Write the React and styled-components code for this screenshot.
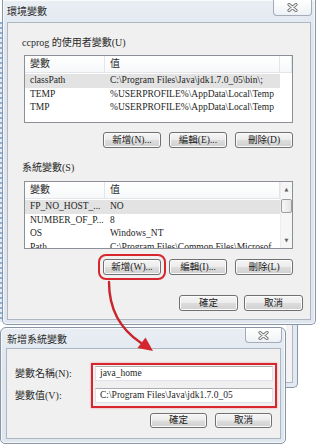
import styled, { createGlobalStyle } from "styled-components";

const GlobalStyle = createGlobalStyle`
  html, body {
    margin: 0;
    padding: 0;
    background: #ffffff;
  }
  body {
    font-family: "Liberation Serif", "Noto Sans CJK TC", serif;
    color: #1e1e1e;
  }
  * {
    box-sizing: border-box;
  }
`;

const userVars = [
  { name: "classPath", value: "C:\\Program Files\\Java\\jdk1.7.0_05\\bin\\;", selected: true },
  { name: "TEMP", value: "%USERPROFILE%\\AppData\\Local\\Temp" },
  { name: "TMP", value: "%USERPROFILE%\\AppData\\Local\\Temp" },
];

const systemVars = [
  { name: "FP_NO_HOST_...", value: "NO", selected: true },
  { name: "NUMBER_OF_P...", value: "8" },
  { name: "OS", value: "Windows_NT" },
  { name: "Path", value: "C:\\Program Files\\Common Files\\Microsof" },
];

function CloseGlyph() {
  return (
    <svg width="11" height="9" viewBox="0 0 11 9">
      <path d="M2 1.5 L9 7.5 M9 1.5 L2 7.5" stroke="#777" strokeWidth="3.2" strokeLinecap="round" />
      <path d="M2 1.5 L9 7.5 M9 1.5 L2 7.5" stroke="#fafafa" strokeWidth="1.3" strokeLinecap="round" />
    </svg>
  );
}

function VarList({ rows, scroll }) {
  return (
    <ListBox>
      <ListBody>
        <ListHeader>
          <HeaderCell $w={80}>變數</HeaderCell>
          <HeaderCell $w={175}>值</HeaderCell>
          {!scroll && <HeaderCell $w={12} />}
        </ListHeader>
        {rows.map((r) => (
          <Row key={r.name} $selected={r.selected}>
            <NameCell>{r.name}</NameCell>
            <ValueCell>{r.value}</ValueCell>
          </Row>
        ))}
      </ListBody>
      {scroll && (
        <ScrollBar>
          <ScrollArrow>▲</ScrollArrow>
          <Thumb />
          <ScrollArrow $down>▼</ScrollArrow>
        </ScrollBar>
      )}
    </ListBox>
  );
}

export default function App() {
  return (
    <Page>
      <GlobalStyle />
      <TopRow>
        <DesktopStrip />
        <Window $cut>
          <TitleBar $h={22}>
            <Title $top={6} $left={4}>環境變數</Title>
            <CloseButton $w={39} $h={16}>
              <CloseGlyph />
            </CloseButton>
          </TitleBar>
          <Panel $h={298}>
            <GroupLabel $top={14}>ccprog 的使用者變數(U)</GroupLabel>
            <ListSlot $top={6}>
              <VarList rows={userVars} />
            </ListSlot>
            <ButtonRow $top={9}>
              <Button $w={58}>新增(N)...</Button>
              <Button $w={58}>編輯(E)...</Button>
              <Button $w={58}>刪除(D)</Button>
            </ButtonRow>
            <GroupLabel $top={14}>系統變數(S)</GroupLabel>
            <ListSlot $top={7}>
              <VarList rows={systemVars} scroll />
            </ListSlot>
            <ButtonRow $top={10}>
              <Button $w={58} $highlight>新增(W)...</Button>
              <Button $w={58}>編輯(I)...</Button>
              <Button $w={58}>刪除(L)</Button>
            </ButtonRow>
            <OkRow>
              <Button $w={59}>確定</Button>
              <Button $w={59}>取消</Button>
            </OkRow>
          </Panel>
        </Window>
      </TopRow>
      <BottomRow>
        <Dialog>
          <TitleBar $h={20}>
            <Title $top={6} $left={6}>新增系統變數</Title>
            <CloseButton $w={37} $h={15}>
              <CloseGlyph />
            </CloseButton>
          </TitleBar>
          <DialogPanel>
            <FieldsRow>
              <Labels>
                <FieldLabel>變數名稱(N):</FieldLabel>
                <FieldLabel>變數值(V):</FieldLabel>
              </Labels>
              <HighlightBox>
                <TextField>java_home</TextField>
                <TextField>C:\Program Files\Java\jdk1.7.0_05</TextField>
              </HighlightBox>
            </FieldsRow>
            <DialogButtons>
              <Button $w={57} $h={15}>確定</Button>
              <Button $w={57} $h={15}>取消</Button>
            </DialogButtons>
          </DialogPanel>
        </Dialog>
        <BehindEdge />
      </BottomRow>
      <ArrowLayer width="318" height="444" viewBox="0 0 318 444">
        <path
          d="M109 282 C 109 306, 117 327, 141 343"
          fill="none"
          stroke="#c9252d"
          strokeWidth="2.4"
          strokeLinecap="round"
        />
        <polygon points="153,351 137.5,348 145.5,337.5" fill="#d4262e" />
      </ArrowLayer>
    </Page>
  );
}

const Page = styled.div`
  position: relative;
  width: 318px;
  height: 444px;
  overflow: hidden;
  display: flex;
  flex-direction: column;
  background: #ffffff;
`;

const TopRow = styled.div`
  display: flex;
  align-items: flex-start;
`;

const DesktopStrip = styled.div`
  width: 2px;
  height: 300px;
  margin-top: 22px;
  background: repeating-linear-gradient(#8fb0d4 0 2px, #e3ebf4 2px 5px);
`;

const Window = styled.div`
  width: 314px;
  height: 325px;
  background: linear-gradient(#e9eef4, #dfe6ee 40px, #dfe6ee);
  border: 1px solid #8796a7;
  border-top: ${(p) => (p.$cut ? "none" : "1px solid #8796a7")};
  border-radius: ${(p) => (p.$cut ? "0 0 5px 5px" : "6px 6px 5px 5px")};
  box-shadow: inset 0 0 0 1px rgba(255, 255, 255, 0.7);
`;

const TitleBar = styled.div`
  height: ${(p) => p.$h}px;
  display: flex;
  justify-content: space-between;
  align-items: flex-start;
`;

const Title = styled.div`
  margin-top: ${(p) => p.$top}px;
  padding-left: ${(p) => p.$left}px;
  font-size: 10px;
  line-height: 12px;
  color: #2a2a2a;
`;

const CloseButton = styled.div`
  width: ${(p) => p.$w}px;
  height: ${(p) => p.$h}px;
  margin-right: 3px;
  display: flex;
  align-items: center;
  justify-content: center;
  border: 1px solid #a3acb7;
  border-top: none;
  border-radius: 0 0 4px 4px;
  background: linear-gradient(#ffffff, #eef2f6);
`;

const Panel = styled.div`
  height: ${(p) => p.$h}px;
  margin: 0 4px;
  background: #f0f0f0;
  border: 1px solid #aeb7c1;
  display: flex;
  flex-direction: column;
`;

const GroupLabel = styled.div`
  margin: ${(p) => p.$top}px 0 0 14px;
  font-size: 10px;
  line-height: 12px;
  color: #2a2a2a;
`;

const ListSlot = styled.div`
  margin: ${(p) => p.$top}px 0 0 16px;
`;

const ListBox = styled.div`
  width: 269px;
  height: 68px;
  background: #ffffff;
  border: 1px solid #8b9098;
  display: flex;
  overflow: hidden;
`;

const ListBody = styled.div`
  flex: 1;
  display: flex;
  flex-direction: column;
`;

const ListHeader = styled.div`
  height: 17px;
  flex-shrink: 0;
  display: flex;
  margin-bottom: 1px;
  background: linear-gradient(#ffffff, #f7f8f9);
  border-bottom: 1px solid #e3e5e8;
`;

const HeaderCell = styled.div`
  width: ${(p) => p.$w}px;
  flex-shrink: 0;
  padding-left: 5px;
  font-size: 10px;
  line-height: 16px;
  border-right: 1px solid #e3e5e8;
  color: #2a2a2a;
`;

const Row = styled.div`
  width: 255px;
  height: 13.5px;
  flex-shrink: 0;
  display: flex;
  background: ${(p) => (p.$selected ? "#e3e3e3" : "transparent")};
  font-size: 9.5px;
  line-height: 13.5px;
  white-space: nowrap;
  color: #1e1e1e;
`;

const NameCell = styled.div`
  width: 80px;
  padding-left: 5px;
  overflow: hidden;
`;

const ValueCell = styled.div`
  flex: 1;
  padding-left: 5px;
  overflow: hidden;
`;

const ScrollBar = styled.div`
  width: 13px;
  display: flex;
  flex-direction: column;
  align-items: center;
  background: #f6f6f6;
  border-left: 1px solid #ececec;
`;

const ScrollArrow = styled.div`
  height: 15px;
  margin-top: ${(p) => (p.$down ? "auto" : "0")};
  font-family: "DejaVu Sans", sans-serif;
  font-size: 5px;
  line-height: 15px;
  color: #606060;
`;

const Thumb = styled.div`
  width: 11px;
  height: 14px;
  margin-top: 2px;
  border: 1px solid #9c9c9c;
  border-radius: 2px;
  background: linear-gradient(90deg, #f7f7f7, #e4e4e4);
`;

const ButtonRow = styled.div`
  width: 269px;
  margin: ${(p) => p.$top}px 0 0 16px;
  display: flex;
  justify-content: flex-end;
  gap: 8px;
`;

const OkRow = styled.div`
  margin-top: 20px;
  padding-right: 7px;
  display: flex;
  justify-content: flex-end;
  gap: 6px;
`;

const Button = styled.div`
  width: ${(p) => p.$w}px;
  height: ${(p) => p.$h || 16}px;
  border: 1px solid #707070;
  border-radius: 3px;
  background: linear-gradient(#f5f5f5, #ececec 48%, #dddddd 52%, #d0d0d0);
  box-shadow: inset 0 0 0 1px #fbfbfb;
  font-size: 9.5px;
  line-height: ${(p) => (p.$h || 16) - 2}px;
  text-align: center;
  white-space: nowrap;
  color: #222222;
  outline: ${(p) => (p.$highlight ? "2px solid #d8262f" : "none")};
  outline-offset: 3px;
`;

const BottomRow = styled.div`
  display: flex;
  align-items: flex-start;
`;

const Dialog = styled.div`
  width: 286px;
  height: 117px;
  margin-top: 2px;
  background: linear-gradient(#e9eef4, #dfe6ee 40px, #dfe6ee);
  border: 1px solid #8796a7;
  border-radius: 6px 6px 5px 5px;
  box-shadow: inset 0 0 0 1px rgba(255, 255, 255, 0.7);
`;

const DialogPanel = styled.div`
  width: 275px;
  height: 91px;
  margin-left: 5px;
  background: #f0f0f0;
  border: 1px solid #aeb7c1;
  display: flex;
  flex-direction: column;
`;

const FieldsRow = styled.div`
  margin-top: 14px;
  padding-left: 8px;
  display: flex;
`;

const Labels = styled.div`
  width: 76px;
  padding-top: 3px;
  display: flex;
  flex-direction: column;
  gap: 7px;
`;

const FieldLabel = styled.div`
  height: 15px;
  font-size: 10px;
  line-height: 15px;
  color: #2a2a2a;
`;

const HighlightBox = styled.div`
  width: 186px;
  padding: 1px 2px 3px;
  border: 2px solid #d8262f;
  box-shadow: 0 0 2px rgba(216, 38, 47, 0.4);
  display: flex;
  flex-direction: column;
  gap: 7px;
`;

const TextField = styled.div`
  height: 15px;
  padding-left: 4px;
  background: #ffffff;
  border: 1px solid #dde2e8;
  border-top-color: #abadb3;
  font-size: 9.5px;
  line-height: 13px;
  white-space: nowrap;
  overflow: hidden;
  color: #1e1e1e;
`;

const DialogButtons = styled.div`
  margin-top: 5px;
  padding-right: 8px;
  display: flex;
  justify-content: flex-end;
  gap: 8px;
`;

const BehindEdge = styled.div`
  position: relative;
  width: 12px;
  height: 63px;
  background: #e3e9f0;
  border-right: 1px solid #8796a7;
  border-bottom: 1px solid #8796a7;
  border-bottom-right-radius: 5px;
  &::after {
    content: "";
    position: absolute;
    left: 0;
    top: 0;
    right: 4px;
    bottom: 4px;
    background: #f4f4f4;
    border-right: 1px solid #aeb7c1;
    border-bottom: 1px solid #aeb7c1;
  }
`;

const ArrowLayer = styled.svg`
  position: absolute;
  left: 0;
  top: 0;
  pointer-events: none;
`;
